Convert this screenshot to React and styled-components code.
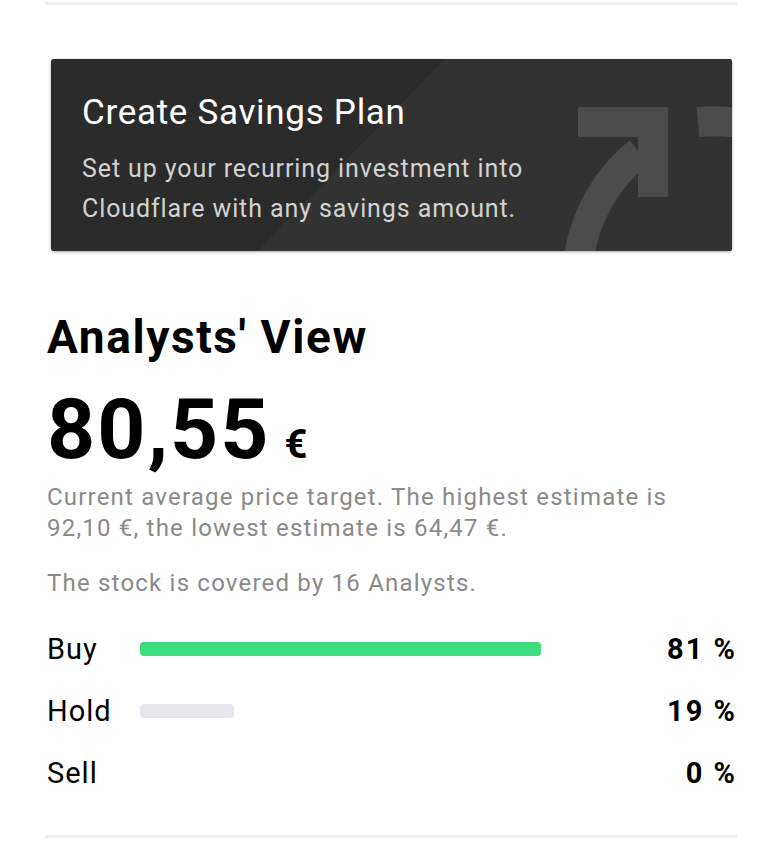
import React from "react";
import styled, { createGlobalStyle } from "styled-components";

const GlobalStyle = createGlobalStyle`
  body {
    margin: 0;
    background: #ffffff;
    font-family: Roboto, "Liberation Sans", sans-serif;
    -webkit-font-smoothing: antialiased;
  }
`;

const ratings = [
  { label: "Buy", value: 81, color: "#3ddc7c" },
  { label: "Hold", value: 19, color: "#e4e7ed" },
  { label: "Sell", value: 0, color: "#e4e7ed" },
];

export default function App() {
  return (
    <PageWrapper>
      <GlobalStyle />
      <Rule />
      <PlanCard>
        <CardShade />
        <PlanIcon viewBox="0 0 200 150" aria-hidden="true">
          <path
            d="M15 150 A 166 166 0 0 1 75 45"
            fill="none"
            stroke="#4b4b4b"
            strokeWidth="30"
          />
          <path d="M14 0 H 104 V 90 H 74 V 30 H 14 Z" fill="#4b4b4b" />
          <path
            d="M134 15 A 166 166 0 0 1 220 30"
            fill="none"
            stroke="#4b4b4b"
            strokeWidth="30"
          />
        </PlanIcon>
        <CardTitle>Create Savings Plan</CardTitle>
        <CardText>
          Set up your recurring investment into
          <br />
          Cloudflare with any savings amount.
        </CardText>
      </PlanCard>

      <SectionTitle>Analysts' View</SectionTitle>
      <Price>
        80,55<Currency>€</Currency>
      </Price>
      <Note>
        Current average price target. The highest estimate is
        <br />
        92,10 €, the lowest estimate is 64,47 €.
      </Note>
      <Note $spaced>The stock is covered by 16 Analysts.</Note>

      <RatingList>
        {ratings.map((r) => (
          <RatingRow key={r.label}>
            <RatingLabel>{r.label}</RatingLabel>
            <Track>
              {r.value > 0 && (
                <Bar $color={r.color} style={{ width: `${r.value}%` }} />
              )}
            </Track>
            <Percent>{r.value} %</Percent>
          </RatingRow>
        ))}
      </RatingList>
      <Rule $bottom />
    </PageWrapper>
  );
}

const PageWrapper = styled.div`
  width: 692px;
  margin-left: 45px;
  padding-top: 2px;
  padding-bottom: 16px;
`;

const Rule = styled.div`
  height: 3px;
  background: #eeeeee;
  margin-top: ${(p) => (p.$bottom ? "31px" : "0")};
`;

const PlanCard = styled.div`
  position: relative;
  overflow: hidden;
  margin: 54px 5px 0 6px;
  height: 192px;
  box-sizing: border-box;
  padding: 32px 31px 0;
  background: #2b2b2b;
  border-radius: 3px;
  box-shadow: 0 1px 3px rgba(0, 0, 0, 0.35);
  color: #ffffff;
`;

const CardShade = styled.div`
  position: absolute;
  inset: 0;
  background: #323232;
  clip-path: polygon(394px 0, 100% 0, 100% 100%, 206px 100%);
`;

const PlanIcon = styled.svg`
  position: absolute;
  left: 513px;
  top: 48px;
  width: 200px;
  height: 150px;
  overflow: visible;
`;

const CardTitle = styled.div`
  position: relative;
  font-size: 35px;
  line-height: 44px;
  font-weight: 400;
  letter-spacing: 0.7px;
`;

const CardText = styled.div`
  position: relative;
  margin-top: 14px;
  font-size: 25px;
  line-height: 40px;
  color: #d2d2d2;
  letter-spacing: 0.9px;
`;

const SectionTitle = styled.h2`
  margin: 60px 0 0 2px;
  font-size: 46px;
  line-height: 52px;
  font-weight: 700;
  color: #000000;
  letter-spacing: 1.6px;
`;

const Price = styled.div`
  margin: 32px 0 0 2px;
  font-size: 84px;
  line-height: 70px;
  font-weight: 700;
  color: #000000;
  letter-spacing: 2px;
`;

const Currency = styled.span`
  margin-left: 14px;
  font-size: 40px;
  font-weight: 700;
`;

const Note = styled.p`
  margin: ${(p) => (p.$spaced ? "24px" : "2px")} 0 0 2px;
  font-size: 24px;
  line-height: 31px;
  color: #8a8a8a;
  letter-spacing: 1.2px;
`;

const RatingList = styled.div`
  margin-top: 19px;
  display: flex;
  flex-direction: column;
`;

const RatingRow = styled.div`
  display: grid;
  grid-template-columns: 93px 495px 1fr;
  align-items: center;
  height: 62px;
  margin-left: 2px;
`;

const RatingLabel = styled.span`
  font-size: 29px;
  color: #000000;
  letter-spacing: 1px;
`;

const Track = styled.div`
  height: 14px;
`;

const Bar = styled.div`
  height: 100%;
  border-radius: 4px;
  background: ${(p) => p.$color};
`;

const Percent = styled.span`
  text-align: right;
  font-size: 29px;
  font-weight: 700;
  color: #000000;
  letter-spacing: 2px;
`;
